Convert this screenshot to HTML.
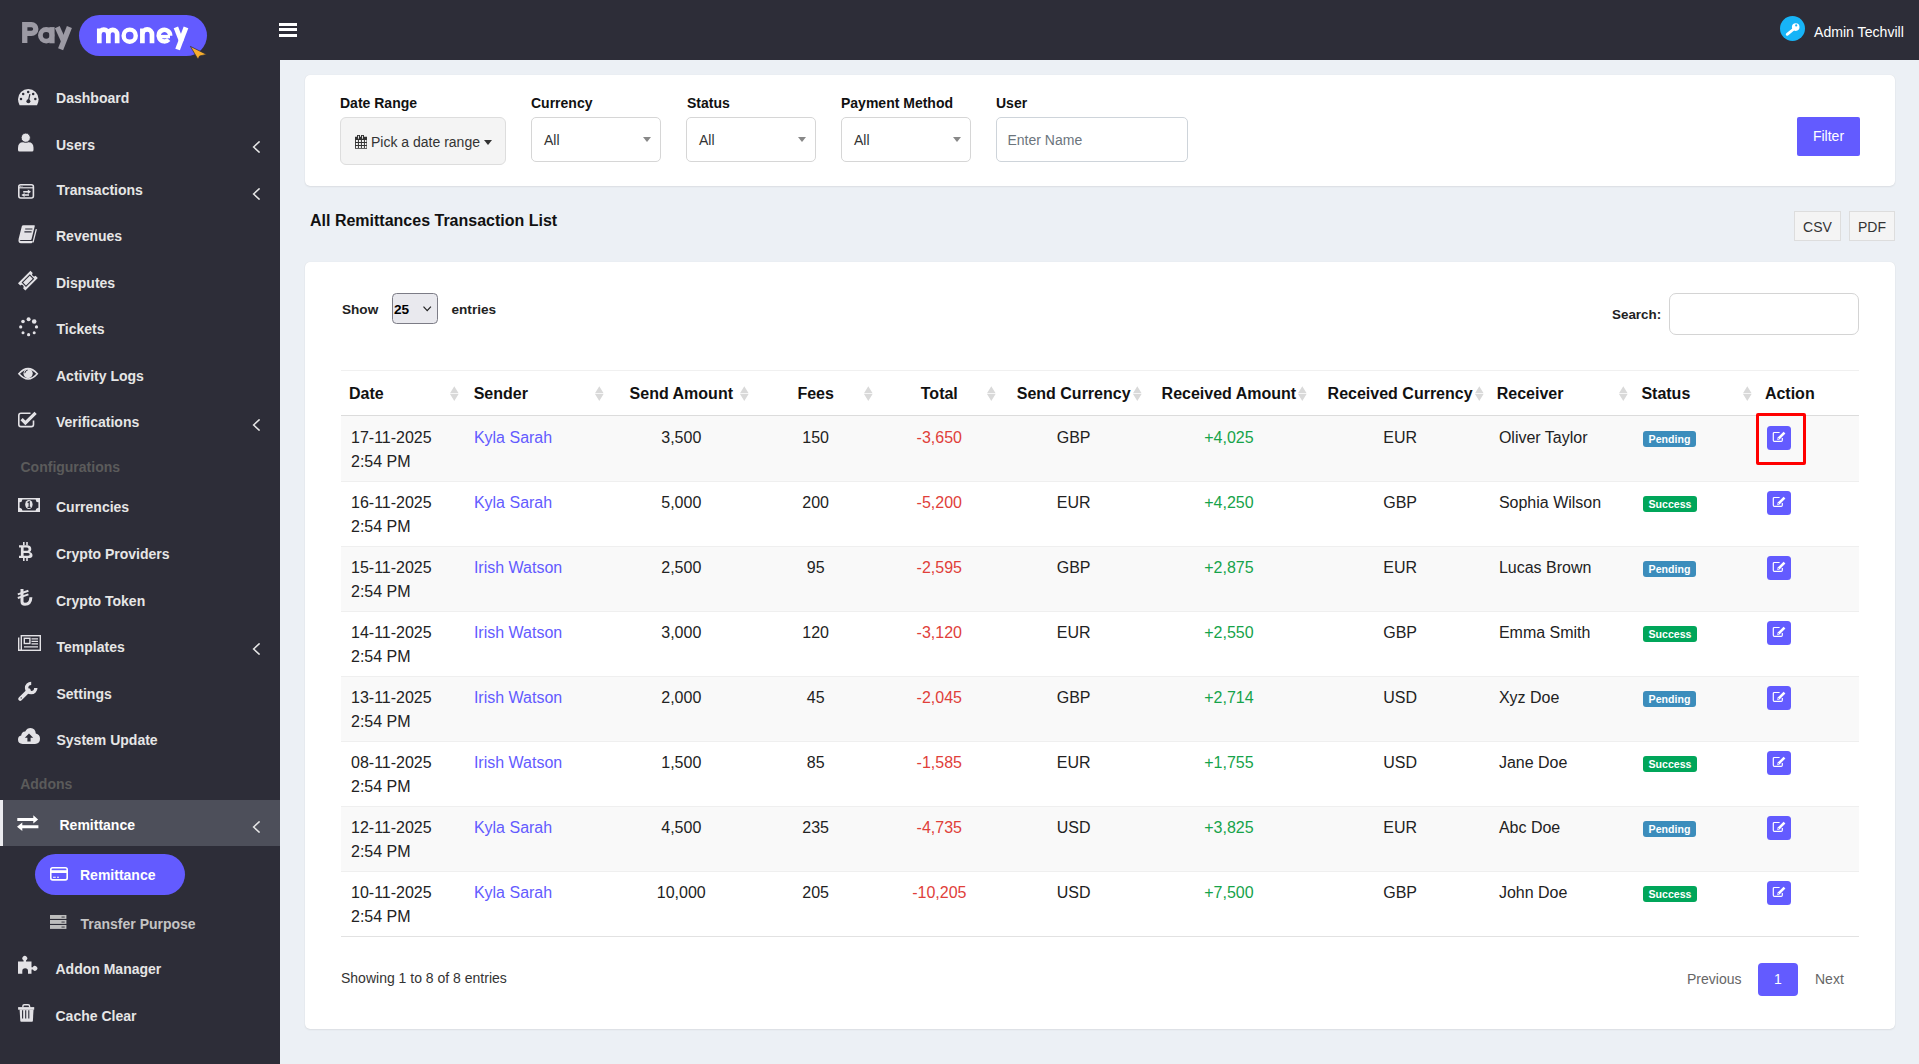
<!DOCTYPE html>
<html><head><meta charset="utf-8"><title>Remittances</title>
<style>
*{box-sizing:border-box;margin:0;padding:0}
html,body{width:1919px;height:1064px;overflow:hidden;background:#ecf0f5;font-family:"Liberation Sans",sans-serif;color:#333}
.abs{position:absolute}
.mt{position:absolute;height:20px;line-height:20px;font-size:14px;font-weight:bold;white-space:nowrap}
.hd{position:absolute;font-size:14px;font-weight:bold;color:#5b5b5b;line-height:20px;height:20px;white-space:nowrap}
.card{position:absolute;background:#fff;border-radius:5px;box-shadow:0 0 1px rgba(0,0,0,.1),0 1px 2px rgba(0,0,0,.07)}
.lbl{position:absolute;font-size:14px;font-weight:bold;color:#111;line-height:20px;white-space:nowrap}
.sel{position:absolute;top:117px;height:45px;border:1px solid #d6d6d6;border-radius:5px;background:#fff;font-size:14px;color:#333}
.sel .v{position:absolute;left:12px;top:12px;line-height:20px}
.sel .car{position:absolute;top:19px;width:0;height:0;border-left:4px solid transparent;border-right:4px solid transparent;border-top:5px solid #888}
.th{position:absolute;font-size:16px;font-weight:bold;color:#111;line-height:24px;white-space:nowrap}
.td{position:absolute;font-size:16px;color:#222;line-height:24px;white-space:nowrap}
.badge{position:absolute;height:16px;border-radius:3px;color:#fff;font-size:10.6px;font-weight:bold;line-height:16px;text-align:center}
</style></head>
<body>

<div class="abs" style="left:0;top:0;width:1919px;height:60px;background:#2d2d38"></div>
<div class="abs" style="left:0;top:60px;width:280px;height:1004px;background:#2d2d38"></div>
<svg class="abs" style="left:0;top:0" width="240" height="60" viewBox="0 0 240 60">
<g fill="none" stroke="#9c9aa4">
<path d="M24.75 43 V24.6 H31.4 A4.4 4.4 0 0 1 31.4 33.4 H24.75" stroke-width="5.3"/>
<circle cx="46.2" cy="35.3" r="5.8" stroke-width="4.8"/>
<path d="M52 27.1 V43.3" stroke-width="5.2"/>
<path d="M57.3 27.1 L64 42" stroke-width="5.2"/>
<path d="M69.4 27.1 L60.6 49.3" stroke-width="5.4"/>
</g>
<rect x="79" y="15" width="128" height="41" rx="20.5" fill="#635bff"/>
<g fill="none" stroke="#fff" stroke-width="4.7">
<path d="M99.3 43.3 V28.4 M99.3 43.3 V34.2 A4.5 4.5 0 0 1 108.35 34.2 V43.3 M108.35 34.2 A4.4 4.4 0 0 1 117.15 34.2 V43.3"/>
<circle cx="129.7" cy="35.65" r="6.05" stroke-width="4.4"/>
<path d="M142.4 43.3 V28.4 M142.4 43.3 V34.2 A4.8 4.8 0 0 1 152 34.2 V43.3"/>
<path d="M170.2 35.65 A5.8 5.8 0 1 0 168.7 39.5" stroke-width="4.5"/>
<path d="M158.8 36.6 H170" stroke-width="3.4"/>
<path d="M175.9 27.4 L181.4 41.5"/>
<path d="M186 27.4 L177.6 49.5" stroke-width="4.9"/>
</g>
<path d="M190.4 46.4 L206.6 54.4 L199.6 56 L198 59.3 Z" fill="#f7ad2c" stroke="#2d2d38" stroke-width="0.7" stroke-linejoin="round"/>
</svg>
<div class="abs" style="left:279px;top:23px;width:18px;height:3px;background:#fff"></div>
<div class="abs" style="left:279px;top:28px;width:18px;height:3px;background:#fff"></div>
<div class="abs" style="left:279px;top:34px;width:18px;height:3px;background:#fff"></div>
<svg class="abs" style="left:1780px;top:16px" width="25" height="25" viewBox="0 0 25 25"><circle cx="12.5" cy="12.5" r="12.5" fill="#17b4f7"/>
<circle cx="15.7" cy="11.1" r="3.8" fill="#fff"/><circle cx="16.2" cy="9.4" r="1.1" fill="#17b4f7"/>
<path d="M13.8 13 L7.2 18.3" stroke="#fff" stroke-width="2.8" stroke-linecap="round"/></svg>
<div class="abs" style="left:1814px;top:21.5px;font-size:14.1px;color:#fff;line-height:20px">Admin Techvill</div>
<div class="abs" style="left:0;top:800px;width:280px;height:46px;background:#4d4f5a"></div>
<div class="abs" style="left:0;top:800px;width:3px;height:46px;background:#ececf0"></div>
<div class="abs" style="left:35px;top:854px;width:150px;height:41px;border-radius:21px;background:#635bff"></div>

<div class="mt" style="left:56.1px;top:88.15px;color:#e6e6e6">Dashboard</div>
<svg class="abs" style="left:17.8px;top:88.6px;overflow:visible" width="21" height="17" viewBox="0 0 21 17"><path d="M1.6 16.3 Q0 13.5 0 10.3 A10.3 10.3 0 0 1 20.6 10.3 Q20.6 13.5 19 16.3 Z" fill="#e3e2e6"/>
<g fill="#2d2d38"><circle cx="10.2" cy="2.9" r="1.25"/><circle cx="5.2" cy="5" r="1.25"/><circle cx="15.2" cy="5" r="1.25"/><circle cx="3" cy="10" r="1.25"/><circle cx="17.3" cy="10" r="1.25"/><circle cx="10.4" cy="12.3" r="2"/></g>
<path d="M11.9 5.2 L10.4 12" stroke="#2d2d38" stroke-width="1.2"/></svg>
<div class="mt" style="left:56.0px;top:135.15px;color:#e6e6e6">Users</div>
<svg class="abs" style="left:17.6px;top:133.3px;overflow:visible" width="16" height="19" viewBox="0 0 16 19"><path d="M1.5 18.5 Q0 18.5 0 17 V14.8 Q0 9.2 5 9.2 H10.5 Q15.5 9.2 15.5 14.8 V17 Q15.5 18.5 14 18.5 Z" fill="#e3e2e6"/>
<circle cx="7.75" cy="4.7" r="4.6" fill="#e3e2e6" stroke="#2d2d38" stroke-width="0.9"/></svg>
<svg class="abs" style="left:252px;top:141.4px" width="9" height="12" viewBox="0 0 9 12"><path d="M7.6 0.4 L1.6 6 L7.6 11.6" stroke="#e6e6e6" stroke-width="1.5" fill="none"/></svg>
<div class="mt" style="left:56.5px;top:180.15px;color:#e6e6e6">Transactions</div>
<svg class="abs" style="left:17.9px;top:183.6px;overflow:visible" width="17" height="15" viewBox="0 0 17 15"><rect x="0.8" y="0.8" width="14.6" height="13.2" rx="2" fill="none" stroke="#e3e2e6" stroke-width="1.6"/>
<path d="M0.8 3.8 H15.4" stroke="#e3e2e6" stroke-width="1.2"/>
<path d="M5.2 7.8 H10.5" stroke="#e3e2e6" stroke-width="1.6"/><path d="M9.8 5.6 L13 7.8 L9.8 10 Z" fill="#e3e2e6"/>
<path d="M6.2 11 H11" stroke="#e3e2e6" stroke-width="1.6"/><path d="M6.6 8.9 L3.3 11 L6.6 13.1 Z" fill="#e3e2e6"/>
<circle cx="2.6" cy="2.3" r="0.5" fill="#e3e2e6"/><circle cx="4" cy="2.3" r="0.5" fill="#e3e2e6"/></svg>
<svg class="abs" style="left:252px;top:187.5px" width="9" height="12" viewBox="0 0 9 12"><path d="M7.6 0.4 L1.6 6 L7.6 11.6" stroke="#e6e6e6" stroke-width="1.5" fill="none"/></svg>
<div class="mt" style="left:56.0px;top:226.15px;color:#e6e6e6">Revenues</div>
<svg class="abs" style="left:18.2px;top:224.8px;overflow:visible" width="20" height="19" viewBox="0 0 20 19"><path d="M5.4 0.2 H16.2 Q17 0.2 16.8 1 L13.5 14.2 Q13.3 14.9 12.6 14.9 H1.4 Q0.4 14.9 0.6 13.9 L3.9 1 Q4.2 0.2 5.4 0.2 Z" fill="#e3e2e6"/>
<path d="M7.2 4 H14.4 M6.4 6.8 H13.6" stroke="#2d2d38" stroke-width="1.2"/>
<path d="M0.5 14.6 Q0 18.2 3 18.2 H13.2 Q14.2 18.2 14.5 17.2 L14.6 16.6 V15.9 H3.2 Q1.8 15.9 1.6 15 Z" fill="#e3e2e6"/>
<path d="M18.3 4.2 L15 17.4" stroke="#e3e2e6" stroke-width="1.3"/></svg>
<div class="mt" style="left:56.0px;top:273.15px;color:#e6e6e6">Disputes</div>
<svg class="abs" style="left:18.2px;top:271px;overflow:visible" width="20" height="20" viewBox="0 0 20 20"><g transform="rotate(-45 9.9 9.6)"><path d="M1.1 4.4 H18.7 V7.6 A2 2 0 0 0 18.7 11.6 V14.8 H1.1 V11.6 A2 2 0 0 0 1.1 7.6 Z" fill="#e3e2e6"/>
<rect x="4.6" y="7" width="10.6" height="5.2" fill="#e3e2e6" stroke="#2d2d38" stroke-width="1.1"/></g></svg>
<div class="mt" style="left:56.5px;top:319.15px;color:#e6e6e6">Tickets</div>
<svg class="abs" style="left:18.5px;top:316.7px;overflow:visible" width="20" height="20" viewBox="0 0 20 20"><g fill="#e3e2e6"><circle cx="9.6" cy="2.3" r="2"/><circle cx="15.2" cy="4.5" r="2.3"/><circle cx="17.5" cy="9.9" r="1.6"/><circle cx="15.2" cy="15.8" r="1.5"/><circle cx="9.6" cy="17.7" r="1.6"/><circle cx="4" cy="15.8" r="1.5"/><circle cx="1.7" cy="9.9" r="1.6"/><circle cx="4" cy="4.5" r="1.8"/></g></svg>
<div class="mt" style="left:56.0px;top:366.15px;color:#e6e6e6">Activity Logs</div>
<svg class="abs" style="left:18px;top:367.4px;overflow:visible" width="21" height="14" viewBox="0 0 21 14"><path d="M0.9 6.8 Q10.1 -3.6 19.3 6.8 Q10.1 17.2 0.9 6.8 Z" fill="none" stroke="#e3e2e6" stroke-width="1.6"/>
<circle cx="10.1" cy="6.6" r="4.6" fill="#e3e2e6"/>
<path d="M6.8 6.2 Q7 3.4 9.6 3.2" stroke="#2d2d38" stroke-width="1" fill="none"/></svg>
<div class="mt" style="left:56.0px;top:411.65px;color:#e6e6e6">Verifications</div>
<svg class="abs" style="left:18px;top:410.8px;overflow:visible" width="20" height="17" viewBox="0 0 20 17"><path d="M12.5 2.2 H3 Q0.8 2.2 0.8 4.4 V13.4 Q0.8 15.6 3 15.6 H13.3 Q15.5 15.6 15.5 13.4 V9.6" fill="none" stroke="#e3e2e6" stroke-width="1.6"/>
<path d="M3.6 8.2 L7.4 12 L17.6 1.8" fill="none" stroke="#e3e2e6" stroke-width="3.2"/></svg>
<svg class="abs" style="left:252px;top:418.5px" width="9" height="12" viewBox="0 0 9 12"><path d="M7.6 0.4 L1.6 6 L7.6 11.6" stroke="#e6e6e6" stroke-width="1.5" fill="none"/></svg>
<div class="hd" style="left:20.5px;top:457.15px">Configurations</div>
<div class="mt" style="left:56.0px;top:497.35px;color:#e6e6e6">Currencies</div>
<svg class="abs" style="left:18px;top:498px;overflow:visible" width="22" height="14" viewBox="0 0 22 14"><rect x="0" y="0" width="22" height="14" fill="#e3e2e6"/>
<path d="M4.4 1.4 H17.6 A3 3 0 0 0 20.4 4.2 V9.8 A3 3 0 0 0 17.6 12.6 H4.4 A3 3 0 0 0 1.6 9.8 V4.2 A3 3 0 0 0 4.4 1.4 Z" fill="#2d2d38"/>
<ellipse cx="10.9" cy="6.5" rx="3.7" ry="4.6" fill="#e3e2e6"/>
<path d="M9.6 4.6 L11.2 3.8 V9.4 M9.6 9.3 H12.6" stroke="#2d2d38" stroke-width="1.2" fill="none"/></svg>
<div class="mt" style="left:56.0px;top:544.15px;color:#e6e6e6">Crypto Providers</div>
<svg class="abs" style="left:18.5px;top:541.9px;overflow:visible" width="14" height="19" viewBox="0 0 14 19"><path d="M0 3.3 H8 Q12.3 3.3 12.3 7.2 Q12.3 9.2 10.6 10 Q13.5 10.8 13.5 13.4 Q13.5 16.1 9.2 16.1 H0 V13.8 H1.9 V5.6 H0 Z" fill="#e3e2e6"/>
<path d="M4.6 5.6 H8 Q9.6 5.6 9.6 7.3 Q9.6 8.8 8 8.8 H4.6 Z M4.6 11 H8.6 Q10.7 11 10.7 12.4 Q10.7 13.8 8.6 13.8 H4.6 Z" fill="#2d2d38"/>
<path d="M4.8 0 V3.6 M8 0 V3.6 M4.8 15.8 V19 M8 15.8 V19" stroke="#e3e2e6" stroke-width="1.6"/></svg>
<div class="mt" style="left:56.0px;top:591.15px;color:#e6e6e6">Crypto Token</div>
<svg class="abs" style="left:18px;top:589.3px;overflow:visible" width="14" height="16" viewBox="0 0 14 16"><path d="M4 0 V12.4 Q4 15.2 7 15.2 Q12.6 15.2 12.9 8.2" fill="none" stroke="#e3e2e6" stroke-width="3"/>
<path d="M-0.2 5.4 L10.4 1.8 M-0.2 9 L10.4 5.4" stroke="#e3e2e6" stroke-width="2"/></svg>
<div class="mt" style="left:56.5px;top:637.15px;color:#e6e6e6">Templates</div>
<svg class="abs" style="left:18px;top:635px;overflow:visible" width="23" height="16" viewBox="0 0 23 16"><rect x="3.3" y="0.7" width="19" height="14.6" fill="none" stroke="#e3e2e6" stroke-width="1.4"/>
<path d="M0.7 2.5 V15.3 H3.3" fill="none" stroke="#e3e2e6" stroke-width="1.4"/>
<rect x="6.3" y="3.3" width="5.6" height="5.2" fill="none" stroke="#e3e2e6" stroke-width="1.4"/>
<path d="M13.5 3.8 H20 M13.5 6.3 H20 M13.5 8.8 H20 M6 11.8 H20" stroke="#e3e2e6" stroke-width="1.2"/></svg>
<svg class="abs" style="left:252px;top:642.5px" width="9" height="12" viewBox="0 0 9 12"><path d="M7.6 0.4 L1.6 6 L7.6 11.6" stroke="#e6e6e6" stroke-width="1.5" fill="none"/></svg>
<div class="mt" style="left:56.5px;top:684.15px;color:#e6e6e6">Settings</div>
<svg class="abs" style="left:18px;top:681.9px;overflow:visible" width="20" height="20" viewBox="0 0 20 20"><path d="M2.2 16.9 L10.8 8.3" stroke="#e3e2e6" stroke-width="4" stroke-linecap="round"/>
<path d="M17.8 6 A4.6 4.6 0 1 1 13.2 1.4" fill="none" stroke="#e3e2e6" stroke-width="3.4"/>
<circle cx="3.2" cy="15.9" r="0.7" fill="#2d2d38"/></svg>
<div class="mt" style="left:56.5px;top:730.15px;color:#e6e6e6">System Update</div>
<svg class="abs" style="left:18px;top:728px;overflow:visible" width="22" height="16" viewBox="0 0 22 16"><path d="M4.6 15.9 Q0 15.9 0 11.6 Q0 8.3 3.2 7.6 Q3.4 3.6 7.2 3.4 Q9 0 12.6 0 Q17.4 0.2 17.8 5.6 Q22 6.4 22 10.8 Q22 15.9 17 15.9 Z" fill="#e3e2e6"/>
<path d="M11 5.6 L6.8 9.8 H9.4 V13.6 H12.6 V9.8 H15.2 Z" fill="#2d2d38"/></svg>
<div class="hd" style="left:20.2px;top:774.15px">Addons</div>
<div class="mt" style="left:59.5px;top:814.75px;color:#fff">Remittance</div>
<svg class="abs" style="left:17.4px;top:814.5px;overflow:visible" width="22" height="16" viewBox="0 0 22 16"><path d="M0.3 2.9 H16.3 V0.3 L21.1 4.4 L16.3 8.5 V5.9 H0.3 Z" fill="#fff"/>
<path d="M21.4 10.3 H5.3 V7.5 L0 11.7 L5.3 15.9 V13.2 H21.4 Z" fill="#fff"/></svg>
<svg class="abs" style="left:252px;top:820.5px" width="9" height="12" viewBox="0 0 9 12"><path d="M7.6 0.4 L1.6 6 L7.6 11.6" stroke="#e6e6e6" stroke-width="1.5" fill="none"/></svg>
<div class="mt" style="left:80.0px;top:865.15px;color:#fff">Remittance</div>
<svg class="abs" style="left:50px;top:867.4px;overflow:visible" width="18" height="14" viewBox="0 0 18 14"><rect x="0.8" y="0.8" width="16.4" height="12.1" rx="1.8" fill="none" stroke="#fff" stroke-width="1.6"/>
<path d="M0.8 4.6 H17.2" stroke="#fff" stroke-width="2.8"/>
<path d="M3 10.2 H5.8 M7 10.2 H9" stroke="#fff" stroke-width="1.1"/></svg>
<div class="mt" style="left:80.5px;top:914.35px;color:#c4c4c4">Transfer Purpose</div>
<svg class="abs" style="left:50px;top:915.4px;overflow:visible" width="17" height="14" viewBox="0 0 17 14"><g fill="#bdbdbd"><rect x="0" y="0" width="16.4" height="3.9"/><rect x="0" y="5" width="16.4" height="3.9"/><rect x="0" y="10" width="16.4" height="3.9"/></g>
<g fill="#2d2d38"><rect x="11.5" y="1.6" width="3.2" height="0.9"/><rect x="11.5" y="6.6" width="3.2" height="0.9"/><rect x="11.5" y="11.6" width="3.2" height="0.9"/></g></svg>
<div class="mt" style="left:55.5px;top:959.15px;color:#e6e6e6">Addon Manager</div>
<svg class="abs" style="left:17.6px;top:955.5px;overflow:visible" width="21" height="19" viewBox="0 0 21 19"><path d="M0 5.6 H5.6 V4.4 A2.4 2.4 0 1 1 8 4.4 V5.6 H13.5 V11.2 H14.8 A2.4 2.4 0 1 1 14.8 13.6 H13.5 V17.7 H10 V15 A2.85 2.85 0 0 0 4.3 15 V17.7 H0 Z" fill="#e3e2e6"/></svg>
<div class="mt" style="left:55.5px;top:1005.75px;color:#e6e6e6">Cache Clear</div>
<svg class="abs" style="left:17.8px;top:1003.7px;overflow:visible" width="17" height="18" viewBox="0 0 17 18"><path d="M4.9 3.4 V2.2 Q4.9 0.7 6.4 0.7 H10.1 Q11.6 0.7 11.6 2.2 V3.4" fill="none" stroke="#e3e2e6" stroke-width="1.4"/>
<rect x="0.1" y="3.1" width="16.1" height="2.6" fill="#e3e2e6"/>
<path d="M1.6 5.6 H15.5 L14.9 16.9 Q14.8 17.7 14 17.7 H3.2 Q2.4 17.7 2.3 16.9 Z" fill="#e3e2e6"/>
<path d="M4.6 6.3 V14.6 M7.7 6.3 V14.6 M10.8 6.3 V14.6" stroke="#2d2d38" stroke-width="1.1"/></svg>

<div class="card" style="left:305px;top:75px;width:1590px;height:111px"></div>
<div class="lbl" style="left:340px;top:93px">Date Range</div>
<div class="abs" style="left:340px;top:117px;width:166px;height:48px;background:#f4f4f4;border:1px solid #ddd;border-radius:6px;font-size:14px;color:#333">
  <span class="abs" style="left:30px;top:14.2px;line-height:20px;white-space:nowrap">Pick a date range</span>
  <svg class="abs" style="left:13px;top:17px" width="14" height="14" viewBox="0 0 14 14"><path d="M1 1.8 H3 V0 H6 V1.8 H7 V0 H10 V1.8 H13 V13.8 H1 Z" fill="#333"/>
  <g fill="#f4f4f4"><rect x="4.1" y="0.9" width="0.9" height="2.8"/><rect x="8.1" y="0.9" width="0.9" height="2.8"/>
  <rect x="1.9" y="5" width="2" height="2"/><rect x="4.9" y="5" width="2" height="2"/><rect x="7.9" y="5" width="2" height="2"/><rect x="10.9" y="5" width="1.6" height="2"/>
  <rect x="1.9" y="8" width="2" height="2"/><rect x="4.9" y="8" width="2" height="2"/><rect x="7.9" y="8" width="2" height="2"/><rect x="10.9" y="8" width="1.6" height="2"/>
  <rect x="1.9" y="11" width="2" height="2"/><rect x="4.9" y="11" width="2" height="2"/><rect x="7.9" y="11" width="2" height="2"/><rect x="10.9" y="11" width="1.6" height="2"/></g></svg>
  <span class="abs" style="left:143px;top:22px;width:0;height:0;border-left:4.5px solid transparent;border-right:4.5px solid transparent;border-top:5px solid #333"></span>
</div>
<div class="lbl" style="left:531px;top:93px">Currency</div>
<div class="sel" style="left:531px;width:130px"><span class="v">All</span><span class="car" style="left:111px"></span></div>
<div class="lbl" style="left:687px;top:93px">Status</div>
<div class="sel" style="left:686px;width:130px"><span class="v">All</span><span class="car" style="left:111px"></span></div>
<div class="lbl" style="left:841px;top:93px">Payment Method</div>
<div class="sel" style="left:841px;width:130px"><span class="v">All</span><span class="car" style="left:111px"></span></div>
<div class="lbl" style="left:996px;top:93px">User</div>
<div class="sel" style="left:996px;width:192px;border-color:#ced4da"><span class="v" style="color:#6c757d;left:10.5px">Enter Name</span></div>
<div class="abs" style="left:1797px;top:117px;width:63px;height:39px;background:#635bff;border-radius:2px;color:#fff;font-size:14px;line-height:39px;text-align:center">Filter</div>
<div class="abs" style="left:310px;top:209px;font-size:16px;font-weight:bold;color:#111;line-height:24px;white-space:nowrap">All Remittances Transaction List</div>
<div class="abs" style="left:1794px;top:211px;width:47px;height:30px;background:#f4f4f4;border:1px solid #ddd;font-size:14px;line-height:30px;text-align:center;color:#333">CSV</div>
<div class="abs" style="left:1849px;top:211px;width:46px;height:30px;background:#f4f4f4;border:1px solid #ddd;font-size:14px;line-height:30px;text-align:center;color:#333">PDF</div>
<div class="card" style="left:305px;top:262px;width:1590px;height:767px"></div>
<div class="abs" style="left:342px;top:299.8px;font-size:13.6px;font-weight:bold;color:#222;line-height:20px">Show</div>
<div class="abs" style="left:392px;top:293px;width:46px;height:31px;background:#e9e9ee;border:1px solid #7c7c86;border-radius:4.5px;"></div>
<svg class="abs" style="left:423px;top:306px" width="9" height="6" viewBox="0 0 9 6"><path d="M0.5 0.6 L4.2 4.6 L7.9 0.6" stroke="#222" stroke-width="1.2" fill="none"/></svg>
<div class="abs" style="left:394px;top:299.8px;font-size:13.6px;font-weight:bold;color:#000;line-height:20px">25</div>
<div class="abs" style="left:451.5px;top:299.8px;font-size:13.6px;font-weight:bold;color:#222;line-height:20px">entries</div>
<div class="abs" style="left:1612px;top:305px;font-size:13.4px;font-weight:bold;color:#222;line-height:20px">Search:</div>
<div class="abs" style="left:1669px;top:293px;width:190px;height:42px;background:#fff;border:1px solid #d4d4d4;border-radius:7px"></div>
<div class="abs" style="left:341px;top:968px;font-size:14px;color:#333;line-height:20px;white-space:nowrap">Showing 1 to 8 of 8 entries</div>
<div class="abs" style="left:1687px;top:969px;font-size:14px;color:#666;line-height:20px">Previous</div>
<div class="abs" style="left:1758px;top:963px;width:40px;height:33px;background:#635bff;border-radius:4px;color:#fff;font-size:14px;line-height:33px;text-align:center">1</div>
<div class="abs" style="left:1815px;top:969px;font-size:14px;color:#666;line-height:20px">Next</div>

<div class="abs" style="left:341px;top:370px;width:1518px;height:1px;background:#f0f0f0"></div>
<div class="abs" style="left:341px;top:415px;width:1518px;height:1px;background:#dcdcdc"></div>
<div class="th" style="left:349.0px;top:381.5px">Date</div>
<svg class="abs" style="left:450.1px;top:386px" width="9" height="15" viewBox="0 0 9 15"><path d="M4.3 0.2 L8.6 7.3 L0 7.3 Z M0 8 L8.6 8 L4.3 15 Z" fill="#d9d9d9"/></svg>
<div class="th" style="left:473.7px;top:381.5px">Sender</div>
<svg class="abs" style="left:595.3px;top:386px" width="9" height="15" viewBox="0 0 9 15"><path d="M4.3 0.2 L8.6 7.3 L0 7.3 Z M0 8 L8.6 8 L4.3 15 Z" fill="#d9d9d9"/></svg>
<div class="th" style="left:608.9px;width:144.8px;text-align:center;top:381.5px">Send Amount</div>
<svg class="abs" style="left:740.1px;top:386px" width="9" height="15" viewBox="0 0 9 15"><path d="M4.3 0.2 L8.6 7.3 L0 7.3 Z M0 8 L8.6 8 L4.3 15 Z" fill="#d9d9d9"/></svg>
<div class="th" style="left:753.7px;width:123.9px;text-align:center;top:381.5px">Fees</div>
<svg class="abs" style="left:864.0px;top:386px" width="9" height="15" viewBox="0 0 9 15"><path d="M4.3 0.2 L8.6 7.3 L0 7.3 Z M0 8 L8.6 8 L4.3 15 Z" fill="#d9d9d9"/></svg>
<div class="th" style="left:877.6px;width:123.4px;text-align:center;top:381.5px">Total</div>
<svg class="abs" style="left:987.4px;top:386px" width="9" height="15" viewBox="0 0 9 15"><path d="M4.3 0.2 L8.6 7.3 L0 7.3 Z M0 8 L8.6 8 L4.3 15 Z" fill="#d9d9d9"/></svg>
<div class="th" style="left:1001.0px;width:145.3px;text-align:center;top:381.5px">Send Currency</div>
<svg class="abs" style="left:1132.7px;top:386px" width="9" height="15" viewBox="0 0 9 15"><path d="M4.3 0.2 L8.6 7.3 L0 7.3 Z M0 8 L8.6 8 L4.3 15 Z" fill="#d9d9d9"/></svg>
<div class="th" style="left:1146.3px;width:165.2px;text-align:center;top:381.5px">Received Amount</div>
<svg class="abs" style="left:1297.9px;top:386px" width="9" height="15" viewBox="0 0 9 15"><path d="M4.3 0.2 L8.6 7.3 L0 7.3 Z M0 8 L8.6 8 L4.3 15 Z" fill="#d9d9d9"/></svg>
<div class="th" style="left:1311.5px;width:177.2px;text-align:center;top:381.5px">Received Currency</div>
<svg class="abs" style="left:1475.1px;top:386px" width="9" height="15" viewBox="0 0 9 15"><path d="M4.3 0.2 L8.6 7.3 L0 7.3 Z M0 8 L8.6 8 L4.3 15 Z" fill="#d9d9d9"/></svg>
<div class="th" style="left:1496.7px;top:381.5px">Receiver</div>
<svg class="abs" style="left:1618.8px;top:386px" width="9" height="15" viewBox="0 0 9 15"><path d="M4.3 0.2 L8.6 7.3 L0 7.3 Z M0 8 L8.6 8 L4.3 15 Z" fill="#d9d9d9"/></svg>
<div class="th" style="left:1641.4px;top:381.5px">Status</div>
<svg class="abs" style="left:1743.3px;top:386px" width="9" height="15" viewBox="0 0 9 15"><path d="M4.3 0.2 L8.6 7.3 L0 7.3 Z M0 8 L8.6 8 L4.3 15 Z" fill="#d9d9d9"/></svg>
<div class="th" style="left:1764.9px;top:381.5px">Action</div>
<div class="abs" style="left:341px;top:416px;width:1518px;height:65px;background:#f9f9f9"></div>
<div class="td" style="left:351.0px;top:426.0px;color:#222">17-11-2025<br>2:54 PM</div>
<div class="td" style="left:473.9px;top:426.0px;color:#635bff">Kyla Sarah</div>
<div class="td" style="left:608.9px;width:144.8px;text-align:center;top:426.0px;color:#222">3,500</div>
<div class="td" style="left:753.7px;width:123.9px;text-align:center;top:426.0px;color:#222">150</div>
<div class="td" style="left:877.6px;width:123.4px;text-align:center;top:426.0px;color:#e0403a">-3,650</div>
<div class="td" style="left:1001.0px;width:145.3px;text-align:center;top:426.0px;color:#222">GBP</div>
<div class="td" style="left:1146.3px;width:165.2px;text-align:center;top:426.0px;color:#16a34a">+4,025</div>
<div class="td" style="left:1311.5px;width:177.2px;text-align:center;top:426.0px;color:#222">EUR</div>
<div class="td" style="left:1498.9px;top:426.0px;color:#222">Oliver Taylor</div>
<div class="badge" style="left:1643px;top:431px;width:53px;background:#3c8dbc">Pending</div>
<div class="abs" style="left:1767px;top:426px;width:24px;height:24px;background:#635bff;border-radius:3.5px"><svg width="24" height="24" viewBox="0 0 24 24" style="position:absolute;left:0;top:0"><path d="M12.6 6.5 H7.4 Q6.3 6.5 6.3 7.6 V14.2 Q6.3 15.3 7.4 15.3 H14.2 Q15.3 15.3 15.3 14.2 V12" stroke="#fff" stroke-width="1.2" fill="none"/><path d="M10.2 14 L10.7 11.6 L16.6 5.7 L18.4 7.5 L12.5 13.4 Z" fill="#fff"/><path d="M11.2 12.2 L12 13" stroke="#635bff" stroke-width="0.7"/></svg></div>
<div class="abs" style="left:341px;top:481px;width:1518px;height:65px;background:#fff"></div>
<div class="abs" style="left:341px;top:481px;width:1518px;height:1px;background:#efefef"></div>
<div class="td" style="left:351.0px;top:491.0px;color:#222">16-11-2025<br>2:54 PM</div>
<div class="td" style="left:473.9px;top:491.0px;color:#635bff">Kyla Sarah</div>
<div class="td" style="left:608.9px;width:144.8px;text-align:center;top:491.0px;color:#222">5,000</div>
<div class="td" style="left:753.7px;width:123.9px;text-align:center;top:491.0px;color:#222">200</div>
<div class="td" style="left:877.6px;width:123.4px;text-align:center;top:491.0px;color:#e0403a">-5,200</div>
<div class="td" style="left:1001.0px;width:145.3px;text-align:center;top:491.0px;color:#222">EUR</div>
<div class="td" style="left:1146.3px;width:165.2px;text-align:center;top:491.0px;color:#16a34a">+4,250</div>
<div class="td" style="left:1311.5px;width:177.2px;text-align:center;top:491.0px;color:#222">GBP</div>
<div class="td" style="left:1498.9px;top:491.0px;color:#222">Sophia Wilson</div>
<div class="badge" style="left:1643px;top:496px;width:54px;background:#00a65a">Success</div>
<div class="abs" style="left:1767px;top:491px;width:24px;height:24px;background:#635bff;border-radius:3.5px"><svg width="24" height="24" viewBox="0 0 24 24" style="position:absolute;left:0;top:0"><path d="M12.6 6.5 H7.4 Q6.3 6.5 6.3 7.6 V14.2 Q6.3 15.3 7.4 15.3 H14.2 Q15.3 15.3 15.3 14.2 V12" stroke="#fff" stroke-width="1.2" fill="none"/><path d="M10.2 14 L10.7 11.6 L16.6 5.7 L18.4 7.5 L12.5 13.4 Z" fill="#fff"/><path d="M11.2 12.2 L12 13" stroke="#635bff" stroke-width="0.7"/></svg></div>
<div class="abs" style="left:341px;top:546px;width:1518px;height:65px;background:#f9f9f9"></div>
<div class="abs" style="left:341px;top:546px;width:1518px;height:1px;background:#efefef"></div>
<div class="td" style="left:351.0px;top:556.0px;color:#222">15-11-2025<br>2:54 PM</div>
<div class="td" style="left:473.9px;top:556.0px;color:#635bff">Irish Watson</div>
<div class="td" style="left:608.9px;width:144.8px;text-align:center;top:556.0px;color:#222">2,500</div>
<div class="td" style="left:753.7px;width:123.9px;text-align:center;top:556.0px;color:#222">95</div>
<div class="td" style="left:877.6px;width:123.4px;text-align:center;top:556.0px;color:#e0403a">-2,595</div>
<div class="td" style="left:1001.0px;width:145.3px;text-align:center;top:556.0px;color:#222">GBP</div>
<div class="td" style="left:1146.3px;width:165.2px;text-align:center;top:556.0px;color:#16a34a">+2,875</div>
<div class="td" style="left:1311.5px;width:177.2px;text-align:center;top:556.0px;color:#222">EUR</div>
<div class="td" style="left:1498.9px;top:556.0px;color:#222">Lucas Brown</div>
<div class="badge" style="left:1643px;top:561px;width:53px;background:#3c8dbc">Pending</div>
<div class="abs" style="left:1767px;top:556px;width:24px;height:24px;background:#635bff;border-radius:3.5px"><svg width="24" height="24" viewBox="0 0 24 24" style="position:absolute;left:0;top:0"><path d="M12.6 6.5 H7.4 Q6.3 6.5 6.3 7.6 V14.2 Q6.3 15.3 7.4 15.3 H14.2 Q15.3 15.3 15.3 14.2 V12" stroke="#fff" stroke-width="1.2" fill="none"/><path d="M10.2 14 L10.7 11.6 L16.6 5.7 L18.4 7.5 L12.5 13.4 Z" fill="#fff"/><path d="M11.2 12.2 L12 13" stroke="#635bff" stroke-width="0.7"/></svg></div>
<div class="abs" style="left:341px;top:611px;width:1518px;height:65px;background:#fff"></div>
<div class="abs" style="left:341px;top:611px;width:1518px;height:1px;background:#efefef"></div>
<div class="td" style="left:351.0px;top:621.0px;color:#222">14-11-2025<br>2:54 PM</div>
<div class="td" style="left:473.9px;top:621.0px;color:#635bff">Irish Watson</div>
<div class="td" style="left:608.9px;width:144.8px;text-align:center;top:621.0px;color:#222">3,000</div>
<div class="td" style="left:753.7px;width:123.9px;text-align:center;top:621.0px;color:#222">120</div>
<div class="td" style="left:877.6px;width:123.4px;text-align:center;top:621.0px;color:#e0403a">-3,120</div>
<div class="td" style="left:1001.0px;width:145.3px;text-align:center;top:621.0px;color:#222">EUR</div>
<div class="td" style="left:1146.3px;width:165.2px;text-align:center;top:621.0px;color:#16a34a">+2,550</div>
<div class="td" style="left:1311.5px;width:177.2px;text-align:center;top:621.0px;color:#222">GBP</div>
<div class="td" style="left:1498.9px;top:621.0px;color:#222">Emma Smith</div>
<div class="badge" style="left:1643px;top:626px;width:54px;background:#00a65a">Success</div>
<div class="abs" style="left:1767px;top:621px;width:24px;height:24px;background:#635bff;border-radius:3.5px"><svg width="24" height="24" viewBox="0 0 24 24" style="position:absolute;left:0;top:0"><path d="M12.6 6.5 H7.4 Q6.3 6.5 6.3 7.6 V14.2 Q6.3 15.3 7.4 15.3 H14.2 Q15.3 15.3 15.3 14.2 V12" stroke="#fff" stroke-width="1.2" fill="none"/><path d="M10.2 14 L10.7 11.6 L16.6 5.7 L18.4 7.5 L12.5 13.4 Z" fill="#fff"/><path d="M11.2 12.2 L12 13" stroke="#635bff" stroke-width="0.7"/></svg></div>
<div class="abs" style="left:341px;top:676px;width:1518px;height:65px;background:#f9f9f9"></div>
<div class="abs" style="left:341px;top:676px;width:1518px;height:1px;background:#efefef"></div>
<div class="td" style="left:351.0px;top:686.0px;color:#222">13-11-2025<br>2:54 PM</div>
<div class="td" style="left:473.9px;top:686.0px;color:#635bff">Irish Watson</div>
<div class="td" style="left:608.9px;width:144.8px;text-align:center;top:686.0px;color:#222">2,000</div>
<div class="td" style="left:753.7px;width:123.9px;text-align:center;top:686.0px;color:#222">45</div>
<div class="td" style="left:877.6px;width:123.4px;text-align:center;top:686.0px;color:#e0403a">-2,045</div>
<div class="td" style="left:1001.0px;width:145.3px;text-align:center;top:686.0px;color:#222">GBP</div>
<div class="td" style="left:1146.3px;width:165.2px;text-align:center;top:686.0px;color:#16a34a">+2,714</div>
<div class="td" style="left:1311.5px;width:177.2px;text-align:center;top:686.0px;color:#222">USD</div>
<div class="td" style="left:1498.9px;top:686.0px;color:#222">Xyz Doe</div>
<div class="badge" style="left:1643px;top:691px;width:53px;background:#3c8dbc">Pending</div>
<div class="abs" style="left:1767px;top:686px;width:24px;height:24px;background:#635bff;border-radius:3.5px"><svg width="24" height="24" viewBox="0 0 24 24" style="position:absolute;left:0;top:0"><path d="M12.6 6.5 H7.4 Q6.3 6.5 6.3 7.6 V14.2 Q6.3 15.3 7.4 15.3 H14.2 Q15.3 15.3 15.3 14.2 V12" stroke="#fff" stroke-width="1.2" fill="none"/><path d="M10.2 14 L10.7 11.6 L16.6 5.7 L18.4 7.5 L12.5 13.4 Z" fill="#fff"/><path d="M11.2 12.2 L12 13" stroke="#635bff" stroke-width="0.7"/></svg></div>
<div class="abs" style="left:341px;top:741px;width:1518px;height:65px;background:#fff"></div>
<div class="abs" style="left:341px;top:741px;width:1518px;height:1px;background:#efefef"></div>
<div class="td" style="left:351.0px;top:751.0px;color:#222">08-11-2025<br>2:54 PM</div>
<div class="td" style="left:473.9px;top:751.0px;color:#635bff">Irish Watson</div>
<div class="td" style="left:608.9px;width:144.8px;text-align:center;top:751.0px;color:#222">1,500</div>
<div class="td" style="left:753.7px;width:123.9px;text-align:center;top:751.0px;color:#222">85</div>
<div class="td" style="left:877.6px;width:123.4px;text-align:center;top:751.0px;color:#e0403a">-1,585</div>
<div class="td" style="left:1001.0px;width:145.3px;text-align:center;top:751.0px;color:#222">EUR</div>
<div class="td" style="left:1146.3px;width:165.2px;text-align:center;top:751.0px;color:#16a34a">+1,755</div>
<div class="td" style="left:1311.5px;width:177.2px;text-align:center;top:751.0px;color:#222">USD</div>
<div class="td" style="left:1498.9px;top:751.0px;color:#222">Jane Doe</div>
<div class="badge" style="left:1643px;top:756px;width:54px;background:#00a65a">Success</div>
<div class="abs" style="left:1767px;top:751px;width:24px;height:24px;background:#635bff;border-radius:3.5px"><svg width="24" height="24" viewBox="0 0 24 24" style="position:absolute;left:0;top:0"><path d="M12.6 6.5 H7.4 Q6.3 6.5 6.3 7.6 V14.2 Q6.3 15.3 7.4 15.3 H14.2 Q15.3 15.3 15.3 14.2 V12" stroke="#fff" stroke-width="1.2" fill="none"/><path d="M10.2 14 L10.7 11.6 L16.6 5.7 L18.4 7.5 L12.5 13.4 Z" fill="#fff"/><path d="M11.2 12.2 L12 13" stroke="#635bff" stroke-width="0.7"/></svg></div>
<div class="abs" style="left:341px;top:806px;width:1518px;height:65px;background:#f9f9f9"></div>
<div class="abs" style="left:341px;top:806px;width:1518px;height:1px;background:#efefef"></div>
<div class="td" style="left:351.0px;top:816.0px;color:#222">12-11-2025<br>2:54 PM</div>
<div class="td" style="left:473.9px;top:816.0px;color:#635bff">Kyla Sarah</div>
<div class="td" style="left:608.9px;width:144.8px;text-align:center;top:816.0px;color:#222">4,500</div>
<div class="td" style="left:753.7px;width:123.9px;text-align:center;top:816.0px;color:#222">235</div>
<div class="td" style="left:877.6px;width:123.4px;text-align:center;top:816.0px;color:#e0403a">-4,735</div>
<div class="td" style="left:1001.0px;width:145.3px;text-align:center;top:816.0px;color:#222">USD</div>
<div class="td" style="left:1146.3px;width:165.2px;text-align:center;top:816.0px;color:#16a34a">+3,825</div>
<div class="td" style="left:1311.5px;width:177.2px;text-align:center;top:816.0px;color:#222">EUR</div>
<div class="td" style="left:1498.9px;top:816.0px;color:#222">Abc Doe</div>
<div class="badge" style="left:1643px;top:821px;width:53px;background:#3c8dbc">Pending</div>
<div class="abs" style="left:1767px;top:816px;width:24px;height:24px;background:#635bff;border-radius:3.5px"><svg width="24" height="24" viewBox="0 0 24 24" style="position:absolute;left:0;top:0"><path d="M12.6 6.5 H7.4 Q6.3 6.5 6.3 7.6 V14.2 Q6.3 15.3 7.4 15.3 H14.2 Q15.3 15.3 15.3 14.2 V12" stroke="#fff" stroke-width="1.2" fill="none"/><path d="M10.2 14 L10.7 11.6 L16.6 5.7 L18.4 7.5 L12.5 13.4 Z" fill="#fff"/><path d="M11.2 12.2 L12 13" stroke="#635bff" stroke-width="0.7"/></svg></div>
<div class="abs" style="left:341px;top:871px;width:1518px;height:65px;background:#fff"></div>
<div class="abs" style="left:341px;top:871px;width:1518px;height:1px;background:#efefef"></div>
<div class="td" style="left:351.0px;top:881.0px;color:#222">10-11-2025<br>2:54 PM</div>
<div class="td" style="left:473.9px;top:881.0px;color:#635bff">Kyla Sarah</div>
<div class="td" style="left:608.9px;width:144.8px;text-align:center;top:881.0px;color:#222">10,000</div>
<div class="td" style="left:753.7px;width:123.9px;text-align:center;top:881.0px;color:#222">205</div>
<div class="td" style="left:877.6px;width:123.4px;text-align:center;top:881.0px;color:#e0403a">-10,205</div>
<div class="td" style="left:1001.0px;width:145.3px;text-align:center;top:881.0px;color:#222">USD</div>
<div class="td" style="left:1146.3px;width:165.2px;text-align:center;top:881.0px;color:#16a34a">+7,500</div>
<div class="td" style="left:1311.5px;width:177.2px;text-align:center;top:881.0px;color:#222">GBP</div>
<div class="td" style="left:1498.9px;top:881.0px;color:#222">John Doe</div>
<div class="badge" style="left:1643px;top:886px;width:54px;background:#00a65a">Success</div>
<div class="abs" style="left:1767px;top:881px;width:24px;height:24px;background:#635bff;border-radius:3.5px"><svg width="24" height="24" viewBox="0 0 24 24" style="position:absolute;left:0;top:0"><path d="M12.6 6.5 H7.4 Q6.3 6.5 6.3 7.6 V14.2 Q6.3 15.3 7.4 15.3 H14.2 Q15.3 15.3 15.3 14.2 V12" stroke="#fff" stroke-width="1.2" fill="none"/><path d="M10.2 14 L10.7 11.6 L16.6 5.7 L18.4 7.5 L12.5 13.4 Z" fill="#fff"/><path d="M11.2 12.2 L12 13" stroke="#635bff" stroke-width="0.7"/></svg></div>
<div class="abs" style="left:341px;top:936px;width:1518px;height:1px;background:#e2e2e2"></div>
<div class="abs" style="left:1756px;top:413px;width:50px;height:52px;border:3px solid #ff0000;border-radius:2px"></div>
</body></html>
